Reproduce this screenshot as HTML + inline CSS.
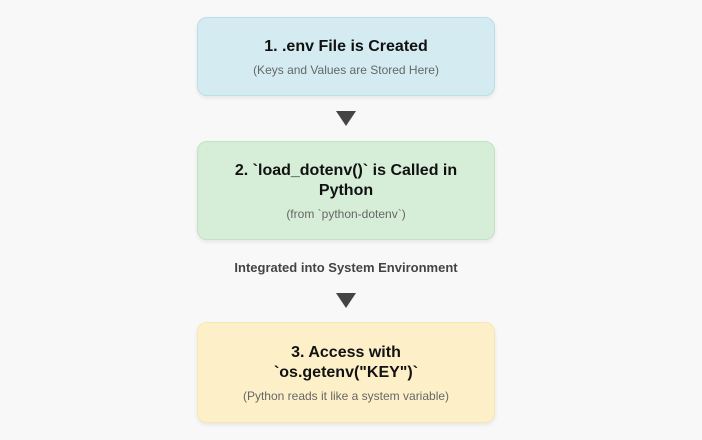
<!DOCTYPE html>
<html><head><style>
body{margin:0;width:702px;height:440px;background:#f8f8f8;font-family:"Liberation Sans",sans-serif;position:relative;overflow:hidden}
.box{position:absolute;left:197px;width:298px;border-radius:10px;box-sizing:border-box;text-align:center;box-shadow:0 2px 4px rgba(0,0,0,0.08)}
.t{font-weight:bold;font-size:16px;color:#111;line-height:20px}
.s{font-size:12px;color:#666;margin-top:6px}
.arr{position:absolute;left:336px;width:0;height:0;border-left:10px solid transparent;border-right:10px solid transparent;border-top:15px solid #444}
</style></head><body>
<div class="box" style="top:17px;height:79px;background:#d4ecf1;border:1px solid #b9dfe7;padding-top:19px"><div class="t">1. .env File is Created</div><div class="s">(Keys and Values are Stored Here)</div></div>
<div class="arr" style="top:111px"></div>
<div class="box" style="top:141px;height:99px;background:#d6eed8;border:1px solid #bfe3c3;padding-top:19px"><div class="t">2. `load_dotenv()` is Called in<br>Python</div><div class="s">(from `python-dotenv`)</div></div>
<div style="position:absolute;top:260px;left:0;width:692px;text-align:center;font-size:13px;font-weight:bold;color:#444">Integrated into System Environment</div>
<div class="arr" style="top:293px"></div>
<div class="box" style="top:322px;height:101px;background:#fdf0c9;border:1px solid #f8e6b4;padding-top:20px"><div class="t">3. Access with<br>`os.getenv("KEY")`</div><div class="s">(Python reads it like a system variable)</div></div>
</body></html>
